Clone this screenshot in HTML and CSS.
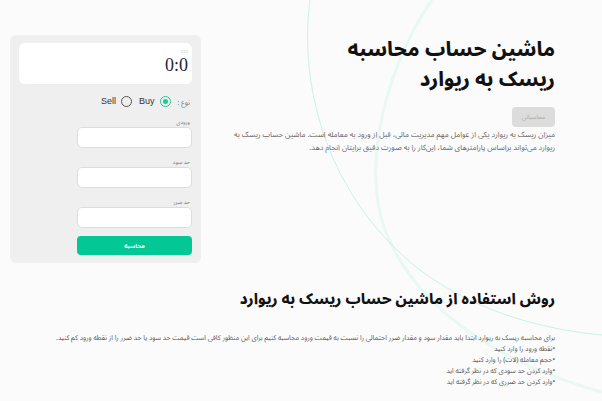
FILE: index.html
```html
<!DOCTYPE html>
<html lang="fa" dir="rtl">
<head>
<meta charset="utf-8">
<link rel="stylesheet" href="styles.css">
</head>
<body>
<svg class="bg-arcs" width="602" height="401" viewBox="0 0 602 401" aria-hidden="true">
  <path d="M432,0 C390,60 360,160 385,230 C420,320 520,370 602,392" fill="none" stroke="#e8f8f2" stroke-width="3"/>
  <path d="M310,0 C298,90 330,200 420,270 C480,315 550,330 602,335" fill="none" stroke="#cdf1e4" stroke-width="1"/>
</svg>
<main class="page">
  <section class="top">
    <div class="intro">
      <h1 class="title">ماشین حساب محاسبه<br>ریسک به ریوارد</h1>
      <button class="tag" disabled>محاسباتی</button>
      <p class="lead">میزان ریسک به ریوارد یکی از عوامل مهم مدیریت مالی، قبل از ورود به معامله است. ماشین حساب ریسک به ریوارد می‌تواند براساس پارامترهای شما، این‌کار را به صورت دقیق برایتان انجام دهد.</p>
    </div>
    <div class="card">
      <div class="display">
        <span class="display-small">123</span>
        <span class="display-value">0:0</span>
      </div>
      <div class="type-row">
        <span class="type-label">نوع :</span>
        <label class="opt"><span class="radio checked"></span><span class="opt-text">Buy</span></label>
        <label class="opt"><span class="radio"></span><span class="opt-text">Sell</span></label>
      </div>
      <div class="field">
        <span class="field-label">ورودی</span>
        <span class="input"></span>
      </div>
      <div class="field">
        <span class="field-label">حد سود</span>
        <span class="input"></span>
      </div>
      <div class="field">
        <span class="field-label">حد ضرر</span>
        <span class="input"></span>
      </div>
      <button class="calc">محاسبه</button>
    </div>
  </section>
  <section class="howto">
    <h2 class="howto-title">روش استفاده از ماشین حساب ریسک به ریوارد</h2>
    <p class="howto-text">برای محاسبه ریسک به ریوارد ابتدا باید مقدار سود و مقدار ضرر احتمالی را نسبت به قیمت ورود محاسبه کنیم برای این منظور کافی است قیمت حد سود یا حد ضرر را از نقطه ورود کم کنید.</p>
    <ul class="steps">
      <li>•نقطه ورود را وارد کنید</li>
      <li>•حجم معامله (لات) را وارد کنید</li>
      <li>•وارد کردن حد سودی که در نظر گرفته اید</li>
      <li>•وارد کردن حد ضرری که در نظر گرفته اید</li>
    </ul>
  </section>
</main>
</body>
</html>
```

FILE: styles.css
```css
* { box-sizing: border-box; }
html, body {
  margin: 0;
  padding: 0;
  background: #fbfbfb;
}
body {
  width: 602px;
  height: 401px;
  overflow: hidden;
  position: relative;
  font-family: "Noto Sans Arabic", "Vazirmatn", "DejaVu Sans", sans-serif;
  color: #222;
}
.bg-arcs {
  position: absolute;
  left: 0;
  top: 0;
  z-index: 0;
}
.page {
  position: relative;
  z-index: 1;
}
.top {
  display: flex;
  flex-direction: row;
  align-items: flex-start;
  gap: 26px;
  padding: 35px 47px 0 10px;
}
.intro {
  flex: 1;
  display: flex;
  flex-direction: column;
  align-items: flex-start;
}
.title {
  margin: 0;
  font-size: 20px;
  line-height: 30px;
  font-weight: 800;
  color: #111;
  white-space: nowrap;
}
.tag {
  margin-top: 12px;
  height: 20px;
  width: 43px;
  padding: 0;
  border: none;
  border-radius: 4px;
  background: #dcdcdc;
  color: #a8a8a8;
  font-family: inherit;
  font-size: 6px;
}
.lead {
  margin: 2px 0 0;
  font-size: 7.6px;
  line-height: 13px;
  color: #666;
}
.card {
  width: 191px;
  flex: none;
  background: #efefef;
  border-radius: 6px;
  padding: 8px 9px 8px 67px;
  display: flex;
  flex-direction: column;
  align-items: stretch;
}
.display {
  margin-left: -58px;
  height: 41px;
  background: #fff;
  border-radius: 6px;
  display: flex;
  flex-direction: column;
  align-items: flex-start;
  padding: 5px 4px 0;
}
.display-small {
  font-family: "Liberation Serif", serif;
  font-size: 5px;
  color: #bbb;
  line-height: 7px;
}
.display-value {
  font-family: "Liberation Serif", serif;
  font-size: 18px;
  line-height: 20px;
  color: #1b1f3b;
  direction: ltr;
}
.type-row {
  display: flex;
  flex-direction: row;
  align-items: center;
  gap: 7px;
  margin-top: 10px;
  height: 14px;
  padding-right: 2px;
}
.type-label {
  font-size: 7px;
  color: #777;
  margin-top: 3px;
}
.opt {
  display: flex;
  flex-direction: row;
  align-items: center;
  gap: 5px;
}
.radio {
  width: 11px;
  height: 11px;
  border: 1.5px solid #555;
  border-radius: 50%;
  display: flex;
  align-items: center;
  justify-content: center;
}
.radio.checked {
  border-color: #1cc998;
}
.radio.checked::after {
  content: "";
  width: 5px;
  height: 5px;
  border-radius: 50%;
  background: #1cc998;
}
.opt-text {
  font-family: "Liberation Sans", Arial, sans-serif;
  font-size: 9px;
  color: #333;
}
.field {
  display: flex;
  flex-direction: column;
  align-items: flex-start;
}
.field-label {
  font-size: 5.5px;
  color: #777;
  line-height: 10px;
  height: 10px;
  margin-top: 9px;
  padding-right: 2px;
}
.field:first-of-type .field-label { margin-top: 6px; }
.input {
  display: block;
  width: 100%;
  height: 21px;
  background: #fff;
  border: 1px solid #dcdcdc;
  border-radius: 5px;
}
.calc {
  margin-top: 8px;
  height: 19px;
  border: none;
  border-radius: 4px;
  background: #03c896;
  color: #fff;
  font-family: inherit;
  font-size: 6px;
  font-weight: 700;
  padding: 0;
}
.howto {
  padding: 0 47px;
  margin-top: 24px;
}
.howto-title {
  margin: 0;
  font-size: 15px;
  line-height: 24px;
  font-weight: 800;
  color: #111;
}
.howto-text {
  margin: 22px 0 0;
  font-size: 6.9px;
  line-height: 11px;
  color: #555;
  white-space: nowrap;
}
.steps {
  list-style: none;
  margin: 0;
  padding: 0;
  font-size: 6.9px;
  line-height: 11px;
  color: #555;
}
```
